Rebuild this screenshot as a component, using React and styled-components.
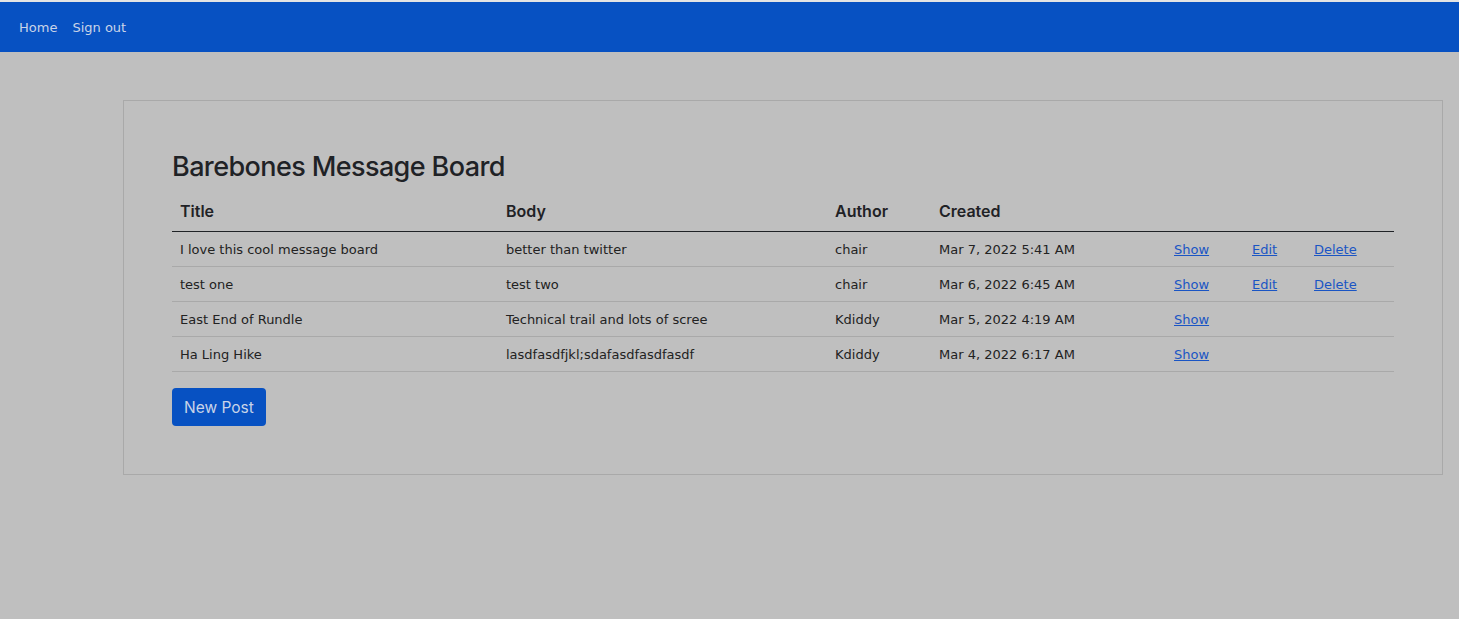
import React from 'react';
import styled, { createGlobalStyle } from 'styled-components';

const GlobalStyle = createGlobalStyle`
  html, body {
    margin: 0;
    padding: 0;
    background: #bfbfbf;
  }
  body {
    font-family: "DejaVu Sans", Verdana, sans-serif;
    color: #212529;
  }
`;

const posts = [
  { title: 'I love this cool message board', body: 'better than twitter', author: 'chair', created: 'Mar 7, 2022 5:41 AM', own: true },
  { title: 'test one', body: 'test two', author: 'chair', created: 'Mar 6, 2022 6:45 AM', own: true },
  { title: 'East End of Rundle', body: 'Technical trail and lots of scree', author: 'Kdiddy', created: 'Mar 5, 2022 4:19 AM', own: false },
  { title: 'Ha Ling Hike', body: 'lasdfasdfjkl;sdafasdfasdfasdf', author: 'Kdiddy', created: 'Mar 4, 2022 6:17 AM', own: false },
];

const App = () => {
  return (
    <Page>
      <GlobalStyle />
      <TopStrip />
      <Nav>
        <NavLink href="#">Home</NavLink>
        <NavLink href="#">Sign out</NavLink>
      </Nav>
      <Main>
        <Card>
          <Heading>Barebones Message Board</Heading>
          <Table>
            <colgroup>
              <col style={{ width: 326 }} />
              <col style={{ width: 329 }} />
              <col style={{ width: 104 }} />
              <col style={{ width: 235 }} />
              <col style={{ width: 78 }} />
              <col style={{ width: 62 }} />
              <col />
            </colgroup>
            <thead>
              <tr>
                <Th>Title</Th>
                <Th>Body</Th>
                <Th>Author</Th>
                <Th>Created</Th>
                <Th />
                <Th />
                <Th />
              </tr>
            </thead>
            <tbody>
              {posts.map((p) => (
                <tr key={p.title}>
                  <Td>{p.title}</Td>
                  <Td>{p.body}</Td>
                  <Td>{p.author}</Td>
                  <Td>{p.created}</Td>
                  <Td><RowLink href="#">Show</RowLink></Td>
                  <Td>{p.own && <RowLink href="#">Edit</RowLink>}</Td>
                  <Td>{p.own && <RowLink href="#">Delete</RowLink>}</Td>
                </tr>
              ))}
            </tbody>
          </Table>
          <Button>New Post</Button>
        </Card>
      </Main>
    </Page>
  );
};

const Page = styled.div`
  min-height: 100vh;
  background: #bfbfbf;
`;

const TopStrip = styled.div`
  height: 2px;
  background: #e4e4e4;
`;

const Nav = styled.nav`
  height: 50px;
  background: #0751c2;
  display: flex;
  align-items: center;
  gap: 15px;
  padding: 0 19px;
`;

const NavLink = styled.a`
  color: #c9d4e8;
  text-decoration: none;
  font-family: "DejaVu Sans", Verdana, sans-serif;
  font-size: 13px;
`;

const Main = styled.main`
  padding: 48px 16px 0 123px;
`;

const Card = styled.section`
  border: 1px solid #a9a9a9;
  padding: 48px 48px 48px 48px;
`;

const Heading = styled.h1`
  margin: 0 0 11px;
  font-family: Inter, "Liberation Sans", sans-serif;
  font-weight: 500;
  font-size: 27px;
  letter-spacing: -0.6px;
  line-height: 36px;
  color: #1f2226;
`;

const Table = styled.table`
  width: 100%;
  border-collapse: collapse;
  table-layout: fixed;
`;

const Th = styled.th`
  text-align: left;
  padding: 5px 8px 10px;
  font-family: Inter, "Liberation Sans", sans-serif;
  font-weight: 600;
  font-size: 16px;
  line-height: 20px;
  color: #1f2226;
  border-bottom: 1px solid #1f2226;
`;

const Td = styled.td`
  padding: 0 8px;
  height: 34px;
  font-size: 13px;
  color: #222;
  border-bottom: 1px solid #a9a9a9;
  white-space: nowrap;
`;

const RowLink = styled.a`
  color: #1a55c4;
  text-decoration: underline;
`;

const Button = styled.button`
  margin-top: 16px;
  background: #0751c2;
  color: #c9d4e8;
  border: none;
  border-radius: 4px;
  padding: 0 12px;
  height: 38px;
  font-family: Inter, "Liberation Sans", sans-serif;
  font-size: 15.5px;
`;

export default App;
